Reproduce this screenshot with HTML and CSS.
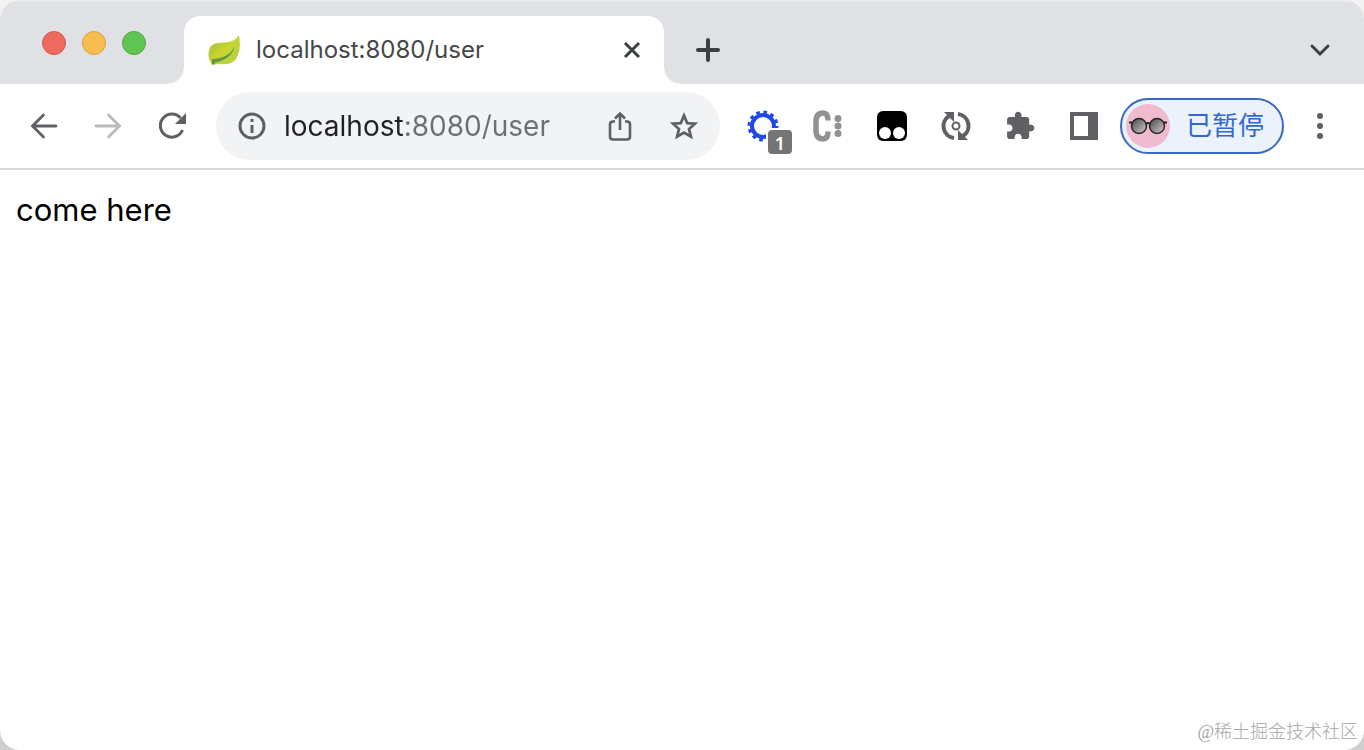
FILE: index.html
```
<!DOCTYPE html>
<html lang="zh-CN">
<head>
    <meta charset="UTF-8">
    <meta name="viewport" content="width=device-width, initial-scale=1.0">
    <title>localhost:8080/user</title>
    <link rel="stylesheet" href="styles.css">
</head>
<body>
    <div class="window">
        <!-- Tab strip -->
        <header class="tab-strip">
            <div class="window-controls">
                <button class="light red" aria-label="关闭窗口"></button>
                <button class="light yellow" aria-label="最小化"></button>
                <button class="light green" aria-label="全屏"></button>
            </div>
            <div class="tab">
                <svg class="favicon" viewBox="0 0 32 32">
                    <defs>
                        <linearGradient id="leaf" x1="0" y1="0" x2="1" y2="1">
                            <stop offset="0" stop-color="#9dbb35"/>
                            <stop offset="0.5" stop-color="#c6d632"/>
                            <stop offset="1" stop-color="#b4cc48"/>
                        </linearGradient>
                    </defs>
                    <path d="M31 1C32 8 33 17 28 25C24 30 17 31 10 30L4 31C0 26-1 18 3 12C8 7 17 10 24 7C27 6 29 4 31 1Z" fill="url(#leaf)"/>
                    <path d="M27 12C23 20 15 25 4 25L4 29C15 28 24 23 27 12Z" fill="#649a3c"/>
                    <path d="M4 28L7 29L5 31Z" fill="#3c7d4d"/>
                </svg>
                <span class="tab-title">localhost:8080/user</span>
                <button class="icon-button dark" aria-label="关闭标签页">
                    <svg viewBox="0 0 40 40"><path d="M13 13L27 27M27 13L13 27" fill="none" stroke="currentColor" stroke-width="3"/></svg>
                </button>
            </div>
            <button class="icon-button dark" aria-label="新标签页">
                <svg viewBox="0 0 40 40"><path d="M20 10V30M10 20H30" fill="none" stroke="currentColor" stroke-width="4" stroke-linecap="round"/></svg>
            </button>
            <button class="icon-button dark tab-search" aria-label="搜索标签页">
                <svg viewBox="0 0 40 40"><path d="M12 16L20 24L28 16" fill="none" stroke="currentColor" stroke-width="3" stroke-linecap="round"/></svg>
            </button>
        </header>

        <!-- Toolbar -->
        <div class="toolbar">
            <button class="icon-button" aria-label="后退">
                <svg viewBox="0 0 40 40"><path d="M32 20H9M19.500 9L8.500 20L19.500 31" fill="none" stroke="currentColor" stroke-width="2.800" stroke-linecap="round"/></svg>
            </button>
            <button class="icon-button" aria-label="前进" disabled>
                <svg viewBox="0 0 40 40"><path d="M8 20H31M20.500 9L31.500 20L20.500 31" fill="none" stroke="currentColor" stroke-width="2.800" stroke-linecap="round"/></svg>
            </button>
            <button class="icon-button" aria-label="重新加载">
                <svg viewBox="0 0 40 40">
                    <path d="M30.500 24A11.500 11.500 0 1 1 28.500 12" fill="none" stroke="currentColor" stroke-width="3"/>
                    <path d="M34 7V18H23Z" fill="currentColor"/>
                </svg>
            </button>
            <div class="omnibox">
                <svg class="info" viewBox="0 0 32 32">
                    <circle cx="16" cy="16" r="12" fill="none" stroke="currentColor" stroke-width="3"/>
                    <path d="M14.500 15H17.500V23H14.500ZM14.500 9H17.500V12H14.500Z" fill="currentColor"/>
                </svg>
                <input class="url" type="text" value="localhost:8080/user" aria-label="地址" spellcheck="false">
                <div class="omnibox-actions">
                    <button class="icon-button" aria-label="分享">
                        <svg viewBox="0 0 40 40"><path d="M15 15.500H13Q10 15.500 10 18.500V30.500Q10 33.500 13 33.500H27Q30 33.500 30 30.500V18.500Q30 15.500 27 15.500H25M20 24V8.500M15 12.500L20 7.500L25 12.500" fill="none" stroke="currentColor" stroke-width="2.600"/></svg>
                    </button>
                    <button class="icon-button" aria-label="添加书签">
                        <svg viewBox="0 0 40 40"><path d="M20 9.500L23.200 17.100L31 17.700L25 22.900L26.900 30.600L20 26.500L13.100 30.600L15 22.900L9 17.700L16.800 17.100Z" fill="none" stroke="currentColor" stroke-width="2.700"/></svg>
                    </button>
                </div>
            </div>
            <div class="extensions">
                <button class="icon-button gear" aria-label="扩展程序 1">
                    <svg viewBox="0 0 40 40">
                        <circle cx="19" cy="20" r="11" fill="none" stroke="#2048e8" stroke-width="4"/>
                        <circle cx="19" cy="20" r="14" fill="none" stroke="#2048e8" stroke-width="3" stroke-dasharray="3.700 3.630"/>
                    </svg>
                    <span class="badge">1</span>
                </button>
                <button class="icon-button gray" aria-label="C 扩展">
                    <svg viewBox="0 0 40 40">
                        <path d="M20 14.500Q20 7 15 7Q8 7 8 16V24Q8 33 15 33Q20 33 20 25.500" fill="none" stroke="currentColor" stroke-width="5.500"/>
                        <circle cx="30" cy="12.500" r="3.500" fill="currentColor"/>
                        <circle cx="30" cy="20" r="3.500" fill="currentColor"/>
                        <circle cx="30" cy="27.500" r="3.500" fill="currentColor"/>
                    </svg>
                </button>
                <button class="icon-button" aria-label="用户脚本">
                    <svg viewBox="0 0 40 40">
                        <rect x="5" y="5" width="30" height="30" rx="6" fill="#000"/>
                        <circle cx="13" cy="27" r="6" fill="#fff"/>
                        <circle cx="27" cy="27" r="6" fill="#fff"/>
                    </svg>
                </button>
                <button class="icon-button" aria-label="同步">
                    <svg viewBox="0 0 40 40">
                        <path d="M18 32A12 12 0 0 1 13 10M22 8A12 12 0 0 1 27 30" fill="none" stroke="currentColor" stroke-width="4"/>
                        <path d="M8 6H18V16ZM22 24V34H32Z" fill="currentColor"/>
                        <circle cx="20" cy="20" r="3.500" fill="none" stroke="currentColor" stroke-width="2"/>
                    </svg>
                </button>
                <button class="icon-button" aria-label="扩展程序">
                    <svg viewBox="0 0 40 40">
                        <path transform="translate(4.500 4.500) scale(1.300)" d="M20.500 11H19V7c0-1.100-.9-2-2-2h-4V3.500C13 2.120 11.880 1 10.500 1S8 2.120 8 3.500V5H4c-1.100 0-1.990.9-1.990 2v3.800H3.500c1.490 0 2.700 1.210 2.700 2.700s-1.210 2.700-2.700 2.700H2V20c0 1.100.9 2 2 2h3.800v-1.500c0-1.490 1.210-2.700 2.700-2.700s2.700 1.210 2.700 2.700V22H17c1.100 0 2-.9 2-2v-4h1.500c1.380 0 2.500-1.120 2.500-2.500S21.880 11 20.500 11z" fill="currentColor"/>
                    </svg>
                </button>
                <button class="icon-button" aria-label="侧边栏">
                    <svg viewBox="0 0 40 40"><path d="M6 6H34V34H6ZM10 10V30H24V10Z" fill="currentColor" fill-rule="evenodd"/></svg>
                </button>
            </div>
            <div class="profile-group">
                <button class="profile">
                    <svg class="avatar" viewBox="0 0 44 44">
                        <defs>
                            <linearGradient id="lens" x1="0" y1="0" x2="1" y2="1">
                                <stop offset="0" stop-color="#444"/>
                                <stop offset="1" stop-color="#d5d0d2"/>
                            </linearGradient>
                        </defs>
                        <circle cx="22" cy="22" r="22" fill="#f1bbcf"/>
                        <path d="M3 18.500H10M34 18.500H41M20 20Q22 18 24 20" fill="none" stroke="#252326" stroke-width="2"/>
                        <circle cx="13" cy="22" r="7.500" fill="url(#lens)" stroke="#252326" stroke-width="1.500"/>
                        <circle cx="31" cy="22" r="7.500" fill="url(#lens)" stroke="#252326" stroke-width="1.500"/>
                    </svg>
                    <span>已暂停</span>
                </button>
                <button class="icon-button" aria-label="菜单">
                    <svg viewBox="0 0 40 40">
                        <circle cx="20" cy="10" r="3" fill="currentColor"/>
                        <circle cx="20" cy="20" r="3" fill="currentColor"/>
                        <circle cx="20" cy="30" r="3" fill="currentColor"/>
                    </svg>
                </button>
            </div>
        </div>

        <!-- Page -->
        <main class="page">come here</main>
        <div class="watermark">@稀土掘金技术社区</div>
    </div>
</body>
</html>
```
FILE: styles.css
```
* {
    box-sizing: border-box;
}

body {
    margin: 0;
    background: linear-gradient(#f2f2f2, #cfcfcf);
    font-family: Inter, "Noto Sans CJK SC", sans-serif;
}

.window {
    position: relative;
    display: flex;
    flex-direction: column;
    min-height: 100vh;
    background: #fff;
    border-radius: 20px;
    overflow: hidden;
}

button {
    border: none;
    padding: 0;
    background: none;
    font-family: inherit;
    cursor: pointer;
}

.icon-button {
    position: relative;
    flex: none;
    width: 40px;
    height: 40px;
    color: #5f6063;
}

.icon-button svg {
    display: block;
    width: 40px;
    height: 40px;
}

.icon-button:disabled {
    color: #bababc;
}

.icon-button.dark {
    color: #3c4043;
}

.icon-button.gray {
    color: #929292;
}

/* Tab strip */
.tab-strip {
    display: flex;
    align-items: center;
    height: 84px;
    padding: 14px 24px 0 42px;
    background: #dfe1e5;
    border-top: 2px solid #e9ebed;
}

.window-controls {
    display: flex;
    gap: 16px;
    width: 142px;
    padding-bottom: 14px;
}

.light {
    width: 24px;
    height: 24px;
    border-radius: 50%;
}

.light.red {
    background: #ee6a5f;
    border: 1px solid #d5564c;
}

.light.yellow {
    background: #f5be4f;
    border: 1px solid #d8a13d;
}

.light.green {
    background: #61c554;
    border: 1px solid #4ea73f;
}

.tab {
    position: relative;
    display: flex;
    align-items: center;
    width: 480px;
    height: 68px;
    margin-right: 24px;
    padding: 0 12px 0 24px;
    background: #fff;
    border-radius: 16px 16px 0 0;
}

.tab::before,
.tab::after {
    content: "";
    position: absolute;
    bottom: 0;
    width: 16px;
    height: 16px;
}

.tab::before {
    left: -16px;
    background: radial-gradient(circle at 0 0, transparent 15px, #fff 16px);
}

.tab::after {
    right: -16px;
    background: radial-gradient(circle at 100% 0, transparent 15px, #fff 16px);
}

.favicon {
    width: 32px;
    height: 32px;
    margin-right: 16px;
}

.tab-title {
    flex: 1;
    color: #45474a;
    font-size: 24px;
    line-height: 32px;
}

.tab-search {
    margin-left: auto;
}

/* Toolbar */
.toolbar {
    display: flex;
    align-items: center;
    gap: 24px;
    height: 86px;
    padding: 0 24px;
    border-bottom: 2px solid #d9d9db;
}

.omnibox {
    display: flex;
    flex: 1;
    align-items: center;
    gap: 16px;
    min-width: 0;
    height: 68px;
    padding: 0 16px 0 20px;
    background: #f1f3f4;
    border-radius: 34px;
}

.info {
    flex: none;
    width: 32px;
    height: 32px;
    color: #5f6063;
}

.url {
    flex: 1;
    min-width: 0;
    height: 40px;
    padding: 0;
    border: none;
    outline: none;
    /* host is darker than port and path */
    background: linear-gradient(90deg, #202124 120px, #6c6f73 120px);
    -webkit-background-clip: text;
    background-clip: text;
    color: transparent;
    caret-color: #202124;
    font-family: inherit;
    font-size: 28px;
    line-height: 40px;
}

.omnibox-actions,
.extensions {
    display: flex;
    gap: 24px;
}

.badge {
    position: absolute;
    right: -8px;
    bottom: -8px;
    width: 24px;
    height: 24px;
    background: #757575;
    border-radius: 4px;
    box-shadow: 0 0 0 2px #fff;
    color: #fff;
    font-family: "Noto Sans", sans-serif;
    font-size: 18px;
    font-weight: 600;
    line-height: 26px;
    text-align: center;
}

.profile-group {
    display: flex;
    align-items: center;
    gap: 16px;
    margin-left: -8px;
}

.profile {
    display: flex;
    align-items: center;
    gap: 16px;
    height: 56px;
    padding: 0 18px 0 4px;
    background: #ebf2fb;
    border: 2px solid #3a68c5;
    border-radius: 28px;
    color: #3367d0;
    font-size: 26px;
    line-height: 36px;
}

.avatar {
    width: 44px;
    height: 44px;
}

/* Page */
.page {
    flex: 1;
    padding: 20px 16px;
    color: #000;
    font-size: 31px;
    line-height: 40px;
}

.watermark {
    position: absolute;
    right: 6px;
    bottom: 6px;
    color: #a6a6a6;
    font-family: "Liberation Serif", "Noto Sans CJK SC", serif;
    font-size: 18px;
    font-weight: 300;
    line-height: 24px;
}
```
